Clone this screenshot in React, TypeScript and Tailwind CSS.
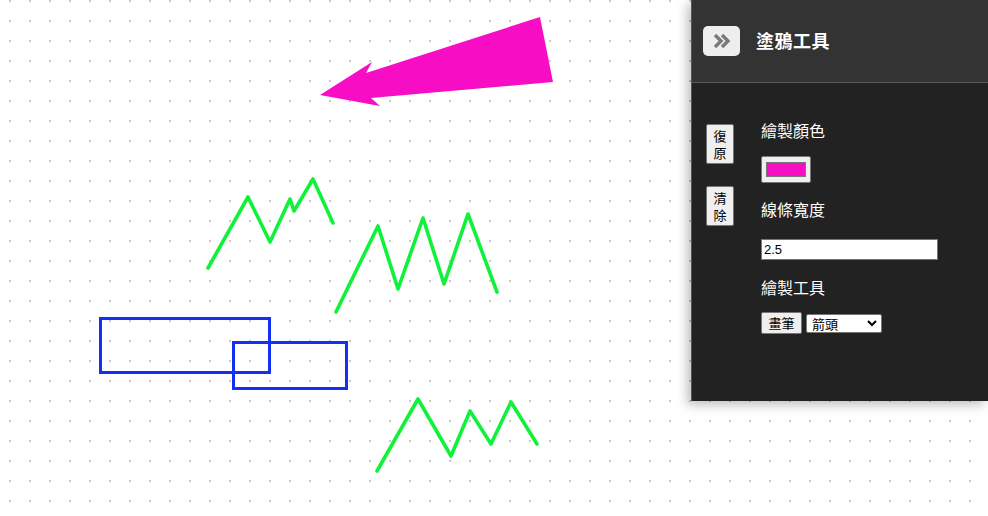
import React from "react";

const font = { fontFamily: '"Noto Sans CJK TC", "Noto Sans CJK SC", sans-serif' };

export default function App() {
  return (
    <div className="relative w-[988px] h-[516px] overflow-hidden bg-white" style={font}>
      <svg width="988" height="516" className="block">
        <defs>
          <pattern id="dots" width="20" height="20" patternUnits="userSpaceOnUse">
            <rect x="9" y="0" width="2" height="2" fill="#c9c9c9" />
          </pattern>
        </defs>
        <rect width="988" height="516" fill="url(#dots)" />
        <polygon
          points="320,95 372,62 366,73 540,17 553,82 371,98 380,106"
          fill="#f70dc4"
        />
        <g fill="none" stroke="#1430f2" strokeWidth="3">
          <rect x="100.5" y="318.5" width="169" height="54" />
          <rect x="233.5" y="342.5" width="113" height="46" />
        </g>
        <g fill="none" stroke="#10f23a" strokeWidth="3.6" strokeLinejoin="round" strokeLinecap="round">
          <polyline points="208,268 248,197 270,242 290,199 294,211 313,179 333,223" />
          <polyline points="336,312 378,226 398,289 423,218 444,284 468,214 497,292" />
          <polyline points="377,471 418,399 451,456 470,411 491,444 511,402 537,444" />
        </g>
      </svg>

      <div className="absolute left-[691px] top-0 w-[297px] h-[401px] bg-[#222222] border-l border-[#555] shadow-[-4px_4px_10px_rgba(0,0,0,0.25)] flex flex-col">
        <div className="h-[83px] bg-[#333333] border-b border-[#5a5a5a] flex items-center pl-[11px] gap-[16px] pb-[1px]">
          <div className="w-[37px] h-[30px] rounded-[5px] bg-[#eeeeee] flex items-center justify-center">
            <svg width="20" height="16" viewBox="0 0 20 16">
              <path d="M3 2 L9 8 L3 14" fill="none" stroke="#7a7a7a" strokeWidth="3.4" />
              <path d="M10 2 L16 8 L10 14" fill="none" stroke="#7a7a7a" strokeWidth="3.4" />
            </svg>
          </div>
          <div className="text-white text-[18px] font-bold tracking-[0.5px]">塗鴉工具</div>
        </div>
        <div className="flex pt-[41px] pl-[14px]">
          <div className="flex flex-col gap-[22px] w-[28px]">
            <button className="w-[28px] h-[40px] bg-[#efefef] border border-[#767676] rounded-[2px] text-[13px] leading-[17px] text-black flex items-center justify-center text-center">
              <span>復<br />原</span>
            </button>
            <button className="w-[28px] h-[40px] bg-[#efefef] border border-[#767676] rounded-[2px] text-[13px] leading-[17px] text-black flex items-center justify-center text-center">
              <span>清<br />除</span>
            </button>
          </div>
          <div className="flex flex-col pl-[27px] -mt-[5px]">
            <div className="text-white text-[16px] leading-[22px]">繪製顏色</div>
            <div className="mt-[15px] w-[50px] h-[27px] bg-[#efefef] border border-[#767676] rounded-[2px] flex items-center justify-center">
              <div className="w-[40px] h-[15px] bg-[#f70dc4] border border-[#777]" />
            </div>
            <div className="mt-[15px] text-white text-[16px] leading-[22px]">線條寬度</div>
            <div className="mt-[19px] w-[177px] h-[21px] bg-white border border-[#767676] text-[13px] leading-[19px] pl-[2px] text-black" style={{ fontFamily: '"Liberation Sans", Arial, sans-serif' }}>
              2.5
            </div>
            <div className="mt-[16px] text-white text-[16px] leading-[22px]">繪製工具</div>
            <div className="mt-[14px] flex items-center gap-[4px]">
              <button className="w-[41px] h-[22px] bg-[#efefef] border border-[#767676] rounded-[2px] text-[13px] leading-[18px] text-black">
                畫筆
              </button>
              <div className="w-[76px] h-[19px] bg-white border border-[#767676] rounded-[2px] flex items-center justify-between pl-[5px] pr-[4px] text-[13px] text-black">
                <span className="leading-[17px]">箭頭</span>
                <svg width="10" height="8" viewBox="0 0 10 8">
                  <path d="M1 2 L5 6 L9 2" fill="none" stroke="#000" strokeWidth="2" />
                </svg>
              </div>
            </div>
          </div>
        </div>
      </div>
    </div>
  );
}
